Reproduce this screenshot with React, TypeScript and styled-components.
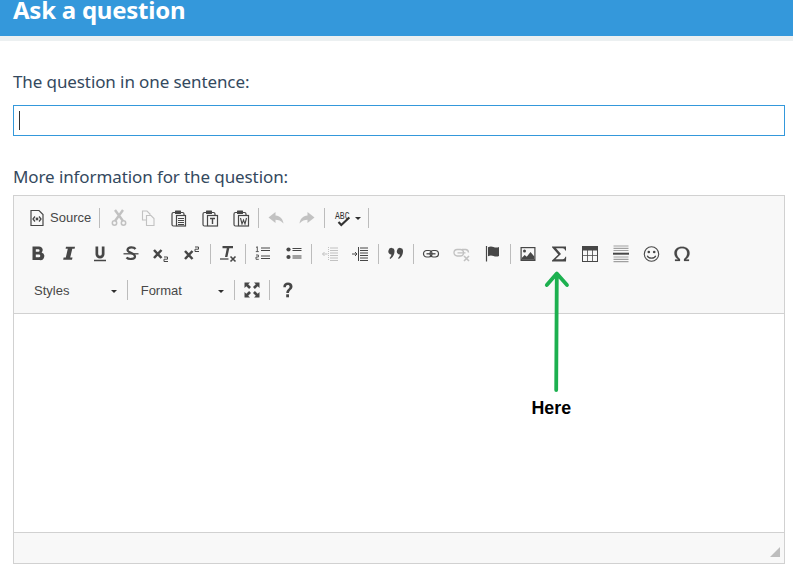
import React from "react";
import styled, { createGlobalStyle } from "styled-components";

const Global = createGlobalStyle`
  html, body { margin: 0; padding: 0; background: #fff; }
  body { width: 793px; height: 581px; overflow: hidden; font-family: "Noto Sans", sans-serif; }
`;
const Page = styled.div`width: 793px; height: 581px; position: relative; overflow: hidden;`;
const Header = styled.header`
  height: 36px; background: #3498db; border-bottom: 5px solid #ecf0f1;
  padding-left: 13px; display: flex; align-items: flex-start;
`;
const Title = styled.h1`
  margin: 0; color: #fff; font: 700 24px/20px "Noto Sans", sans-serif; letter-spacing: -0.25px;
`;
const Main = styled.main`padding: 31px 8px 0 13px;`;
const Label = styled.label`
  display: block; color: #34495e; font: 400 17px/20px "Noto Sans", sans-serif; letter-spacing: -0.1px;
`;
const InputBox = styled.div`
  box-sizing: border-box; height: 31px; margin: 13px 0 31px; border: 1px solid #3498db; padding: 5px;
`;
const Caret = styled.div`width: 1px; height: 19px; background: #333;`;
const Editor = styled.div`
  box-sizing: border-box; height: 369px; margin-top: 8px; border: 1px solid #d1d1d1;
  display: flex; flex-direction: column; background: #fff;
`;
const Toolbar = styled.div`
  box-sizing: border-box; height: 118px; padding: 4px 0 0 9px; background: #f8f8f8;
  border-bottom: 1px solid #d1d1d1;
`;
const Row = styled.div`display: flex; align-items: center; height: 36px;`;
const Btn = styled.span<{ $off?: boolean }>`
  flex: none; width: 30.8px; height: 24px; display: flex; align-items: center; justify-content: center;
  svg { width: 18px; height: 18px; display: block; opacity: ${p => (p.$off ? 0.3 : 1)}; }
`;
const SourceBtn = styled.span`
  flex: none; width: 74.500px; display: flex; align-items: center; gap: 5px; padding-left: 6px; box-sizing: border-box;
  color: #474747; font: 400 13px/18px "Liberation Sans", Arial, sans-serif;
  svg { width: 16px; height: 18px; flex: none; }
`;
const SpellBtn = styled.span`
  flex: none; width: 39px; display: flex; align-items: center; gap: 3px; padding-left: 6.500px; box-sizing: border-box;
  svg { width: 18px; height: 18px; flex: none; }
`;
const Sep = styled.span`flex: none; width: 1px; height: 20px; margin: 0 1.850px; background: #bcbcbc;`;
const Combo = styled.span`
  flex: none; width: 102px; box-sizing: border-box; padding: 2px 8px 0 11px; display: flex; align-items: center;
  justify-content: space-between; color: #484848; font: 400 13px/18px "Liberation Sans", Arial, sans-serif;
`;
const Caretdown = styled.i`width: 0; height: 0; border: 3px solid transparent; border-top-color: #2f2f2f; border-bottom: 0; flex: none;`;
const Content = styled.div`flex: 1; background: #fff;`;
const Footer = styled.div`
  height: 31px; box-sizing: border-box; background: #f8f8f8; border-top: 1px solid #d1d1d1;
  display: flex; justify-content: flex-end; align-items: flex-end; padding: 0 4px 6px 0;
`;
const Grip = styled.i`
  width: 10px; height: 10px; background: #bdbdbd; clip-path: polygon(100% 0, 100% 100%, 0 100%);
`;
const ArrowSvg = styled.svg`position: absolute; left: 540px; top: 268px; width: 34px; height: 126px;`;
const Here = styled.span`
  position: absolute; left: 531.500px; top: 398px; color: #000; font: 700 17.800px/20px "Liberation Sans", Arial, sans-serif;
`;

const S = ({ children }: { children: React.ReactNode }) => (
  <svg viewBox="0 0 18 18" fill="none">{children}</svg>
);
const C = "#474747";
const clip = (
  <>
    <path d="M5 3.500H3.500Q2 3.500 2 5V15.500Q2 17 3.500 17H6" stroke={C} strokeWidth="1.200" />
    <path d="M11 3.500h1.500Q14 3.500 14 5V6" stroke={C} strokeWidth="1.200" />
    <rect x="5" y="1.500" width="6" height="3.500" rx=".5" fill={C} />
  </>
);
const icons: Record<string, React.ReactNode> = {
  cut: <S><path d="M6 1l8 11M14 1L6 12" stroke={C} strokeWidth="2.400" /><circle cx="5.500" cy="14" r="2.200" stroke={C} strokeWidth="1.500" /><circle cx="14.500" cy="14" r="2.200" stroke={C} strokeWidth="1.500" /></S>,
  copy: <S><path d="M7 11H3.500V2H8l3 3v1" stroke={C} strokeWidth="1.100" /><path d="M7.500 6.500H12l3 3v7H7.500z" stroke={C} strokeWidth="1.100" /></S>,
  paste: <S>{clip}<rect x="6.500" y="6.500" width="9" height="10.500" stroke={C} strokeWidth="1.200" /><path d="M8 9.500h6M8 11.500h6M8 13.500h6M8 15.500h6" stroke={C} /></S>,
  pasteT: <S>{clip}<rect x="6.500" y="6.500" width="10" height="10.500" stroke={C} strokeWidth="1.200" /><path d="M9 9.500h5M11.500 9.500v5.500" stroke={C} strokeWidth="1.400" /></S>,
  pasteW: <S>{clip}<rect x="6.500" y="6.500" width="10" height="10.500" stroke={C} strokeWidth="1.200" /><path d="M8.500 9l1.500 6 1.500-4 1.500 4 1.500-6" stroke={C} strokeWidth="1.100" /></S>,
  undo: <S><path d="M8.500 3L1.500 8.500 8.500 14v-3.300c3 0 5.500 1 8 3.800-.5-4.500-3.500-7.700-8-8z" fill={C} /></S>,
  redo: <S><path d="M9.500 3L16.500 8.500 9.500 14v-3.300c-3 0-5.500 1-8 3.800.5-4.500 3.500-7.700 8-8z" fill={C} /></S>,
  spell: <S><text x="1" y="10" fontFamily="Liberation Mono, monospace" fontSize="11.500" fill="#333" textLength="14.500" lengthAdjust="spacingAndGlyphs">ABC</text><path d="M4.500 13l2.800 3 8-7.500" stroke="#333" strokeWidth="2.200" /></S>,
  bold: <S><path d="M3.500 1.500h6.500a3.500 3.500 0 012.600 6A3.900 3.900 0 0110.500 15H3.500zM6.800 4.200v2.600h2.500a1.300 1.300 0 000-2.600zM6.800 9.500v2.800h3.100a1.400 1.400 0 000-2.800z" fill={C} fillRule="evenodd" /></S>,
  italic: <S><path d="M6 1.800H15l-.4 2h-2.300L10.200 12.500h2.300L12 14.800H3.200l.4-2.300h2.200L7.800 3.800H5.600z" fill={C} /></S>,
  under: <S><path d="M4.500 1.500v7.500a4.500 4.500 0 009 0V1.500h-2.700v7.500a1.800 1.800 0 01-3.600 0V1.500z" fill={C} /><path d="M3 15.500h12" stroke={C} strokeWidth="1.500" /></S>,
  strike: <S><path d="M13.500 4C12 2 6 1.500 5.500 4.800c-.4 3 7.500 3 7.500 6.700 0 3-6.500 3.200-8.500 1" stroke={C} strokeWidth="2.200" /><path d="M1.500 8.800h15" stroke={C} strokeWidth="1.300" /></S>,
  sub: <S><path d="M1 5l7.500 8M8.500 5L1 13" stroke={C} strokeWidth="2.500" /><path d="M11 12h3.500v2.200H11v2.300h4" stroke={C} strokeWidth="1" /></S>,
  sup: <S><path d="M2 6l7.500 8M9.500 6L2 14" stroke={C} strokeWidth="2.500" /><path d="M12 2h3.500v2.200H12v2.300h4" stroke={C} strokeWidth="1" /></S>,
  clear: <S><path d="M3.500 1h10.500v2.300H10.300L8.400 12H6l1.800-8.700H3.500z" fill={C} /><path d="M1 14h8.500" stroke={C} strokeWidth="1.300" /><path d="M11.500 11.500l5 5M16.500 11.500l-5 5" stroke={C} strokeWidth="1.600" /></S>,
  ol: <S><path d="M2 2.500l1.300-.8v4.800M1.800 6.600h3M2 10h2.400v2H2v2.300h2.800" stroke={C} strokeWidth=".9" /><path d="M7 3h9M7 5.500h9M7 11h9M7 13.500h9" stroke={C} strokeWidth="1.200" /></S>,
  ul: <S><circle cx="3.500" cy="4.500" r="2.100" fill={C} /><circle cx="3.500" cy="12" r="2.100" fill={C} /><path d="M7.500 3.500h9M7.500 5.500h9M7.500 11h9M7.500 13h9" stroke={C} strokeWidth="1.200" /></S>,
  outdent: <S><path d="M1.500 9h5M3.500 7l-2 2 2 2" stroke={C} /><path d="M7.500 2v14" stroke={C} strokeDasharray="1 1" /><path d="M9 3h8M9 5.500h8M9 8h8M9 10.500h8M9 13h8M9 15.500h8" stroke={C} strokeWidth="1.100" /></S>,
  indent: <S><path d="M1 9h5M4 7l2 2-2 2" stroke={C} /><path d="M7.500 2v14" stroke={C} /><path d="M9 3h8M9 5.500h8M9 8h8M9 10.500h8M9 13h8M9 15.500h8" stroke={C} strokeWidth="1.100" /></S>,
  quote: <S><path d="M1.500 5.500a3 3 0 116 .8C7.500 10 5.500 12.500 3.300 14l-.8-1c1.200-1.200 1.800-2.200 1.900-3.500A3 3 0 011.500 5.500zM10 5.500a3 3 0 116 .8C16 10 14 12.500 11.800 14l-.8-1c1.200-1.200 1.800-2.200 1.900-3.500A3 3 0 0110 5.500z" fill={C} /></S>,
  link: <S><rect x="1.500" y="5.500" width="8.500" height="6.500" rx="3.200" stroke={C} strokeWidth="1.200" /><rect x="8" y="5.500" width="8.500" height="6.500" rx="3.200" stroke={C} strokeWidth="1.200" /><path d="M4.500 8.800h9" stroke={C} strokeWidth="1.300" /></S>,
  unlink: <S><rect x="1" y="4.500" width="9.500" height="6.500" rx="3.200" stroke={C} strokeWidth="1.300" /><path d="M9 4.500h3.500a3.200 3.200 0 013 3M4.500 7.800h8" stroke={C} strokeWidth="1.300" /><path d="M11 11l5 5M16 11l-5 5" stroke={C} strokeWidth="1.600" /></S>,
  flag: <S><path d="M2.500 1v15.500" stroke={C} strokeWidth="1.200" /><path d="M4 2.200c2-1 4-.8 5.500-.2 2 .8 4 .6 5.500 0v9c-1.500.6-3.500.8-5.500 0-1.500-.6-3.500-.8-5.500.2z" fill={C} /></S>,
  image: <S><path d="M1.500 2h15v14h-15z" fill={C} /><path d="M2.700 3.200h12.600v11H2.700z" fill="#f8f8f8" /><circle cx="5.500" cy="6" r="1.500" fill={C} /><path d="M2.700 14.200v-1.200l3-3 2 1.800 3.800-4.700 3.800 4.400v2.700z" fill={C} /></S>,
  sigma: <S><path d="M2 1.500h14v4h-.9c-.3-1.400-1-2.200-2.600-2.200H6l5 5.700-5.500 5.200h7.200c1.500 0 2.300-.9 2.600-2.400h.9L16 16.500H2v-.9l6.300-6L2 2.300z" fill={C} /></S>,
  table: <S><path d="M1 1h16v16H1z" fill={C} /><path d="M2 5.500h4.200v4.800H2zM7 5.500h4.200v4.800H7zM12 5.500h4v4.800h-4zM2 11h4.200v5H2zM7 11h4.200v5H7zM12 11h4v5h-4z" fill="#f8f8f8" /></S>,
  hr: <S><path d="M1.500 1h15M1.500 3.300h15M1.500 5.500h15M1.500 12h15M1.500 14.300h15M1.500 16.600h15" stroke="#a0a0a0" strokeWidth="1.200" /><path d="M1 8.700h16" stroke={C} strokeWidth="2" /></S>,
  smile: <S><circle cx="8.500" cy="9" r="7.200" stroke={C} strokeWidth="1.100" /><circle cx="5.800" cy="7" r="1.300" fill={C} /><circle cx="11.200" cy="7" r="1.300" fill={C} /><path d="M4.300 10.800c1 3.200 7.400 3.200 8.400 0" stroke={C} strokeWidth="1.200" /></S>,
  omega: <S><path d="M2 16h5v-2C5 12.700 3.800 10.500 3.800 8c0-3 2-4.800 5.200-4.800S14.200 5 14.200 8c0 2.500-1.200 4.700-3.200 6v2h5v-1.500h-3v-.2c2.300-1.300 3.600-3.600 3.600-6.300 0-3.700-3-6.300-7.600-6.300S1.400 4.300 1.400 8c0 2.700 1.300 5 3.600 6.300v.2H2z" fill={C} stroke={C} strokeWidth=".2" /></S>,
  max: <S><path d="M1.500 1.500h5.500L5.200 3.300 8 6.100 6.100 8 3.300 5.200 1.500 7zM16.500 1.500V7l-1.800-1.800-2.800 2.800L10 6.100l2.800-2.800L11 1.500zM1.500 16.500V11l1.800 1.800L6.100 10 8 11.900l-2.800 2.800L7 16.500zM16.500 16.500H11l1.800-1.800L10 11.900 11.900 10l2.800 2.800 1.800-1.800z" fill={C} /></S>,
  help: <S><path d="M5.300 6.200C5.300 3 7.100 1.500 10 1.500c2.700 0 4.500 1.600 4.500 4 0 3.200-3.500 3.500-3.500 6.500H8.300c0-3.800 3.300-4 3.300-6.200 0-1.200-.7-1.800-1.800-1.800-1.200 0-1.900.9-1.900 2.200z" fill={C} /><rect x="8.200" y="13.300" width="2.800" height="3" fill={C} /></S>,
};

const I = ({ n, off }: { n: string; off?: boolean }) => <Btn $off={off}>{icons[n]}</Btn>;

export default function App() {
  return (
    <Page>
      <Global />
      <Header><Title>Ask a question</Title></Header>
      <Main>
        <Label>The question in one sentence:</Label>
        <InputBox><Caret /></InputBox>
        <Label>More information for the question:</Label>
        <Editor>
          <Toolbar>
            <Row>
              <SourceBtn>
                <svg viewBox="0 0 16 18" fill="none">
                  <path d="M2 1.500h8l4 4V16.500H2z" stroke={C} strokeWidth="1.200" />
                  <path d="M6 7.500L4 10l2 2.500M10 7.500l2 2.500-2 2.500" stroke={C} strokeWidth="1.300" />
                  <circle cx="8" cy="10" r="1.400" fill={C} />
                </svg>
                Source
              </SourceBtn>
              <Sep />
              <I n="cut" off /><I n="copy" off /><I n="paste" /><I n="pasteT" /><I n="pasteW" />
              <Sep />
              <I n="undo" off /><I n="redo" off />
              <Sep />
              <SpellBtn>{icons.spell}<Caretdown /></SpellBtn>
              <Sep />
            </Row>
            <Row>
              <I n="bold" /><I n="italic" /><I n="under" /><I n="strike" /><I n="sub" /><I n="sup" />
              <Sep />
              <I n="clear" />
              <Sep />
              <I n="ol" /><I n="ul" />
              <Sep />
              <I n="outdent" off /><I n="indent" />
              <Sep />
              <I n="quote" />
              <Sep />
              <I n="link" /><I n="unlink" off /><I n="flag" />
              <Sep />
              <I n="image" /><I n="sigma" /><I n="table" /><I n="hr" /><I n="smile" /><I n="omega" />
            </Row>
            <Row>
              <Combo>Styles<Caretdown /></Combo>
              <Sep />
              <Combo>Format<Caretdown /></Combo>
              <Sep />
              <I n="max" />
              <Sep />
              <I n="help" />
            </Row>
          </Toolbar>
          <Content />
          <Footer><Grip /></Footer>
        </Editor>
      </Main>
      <ArrowSvg viewBox="0 0 34 126" fill="none">
        <path d="M16.200 122L16.800 6M6.800 17L16.800 5.500 27 17" stroke="#1cb04f" strokeWidth="3.800" strokeLinecap="round" strokeLinejoin="round" />
      </ArrowSvg>
      <Here>Here</Here>
    </Page>
  );
}
